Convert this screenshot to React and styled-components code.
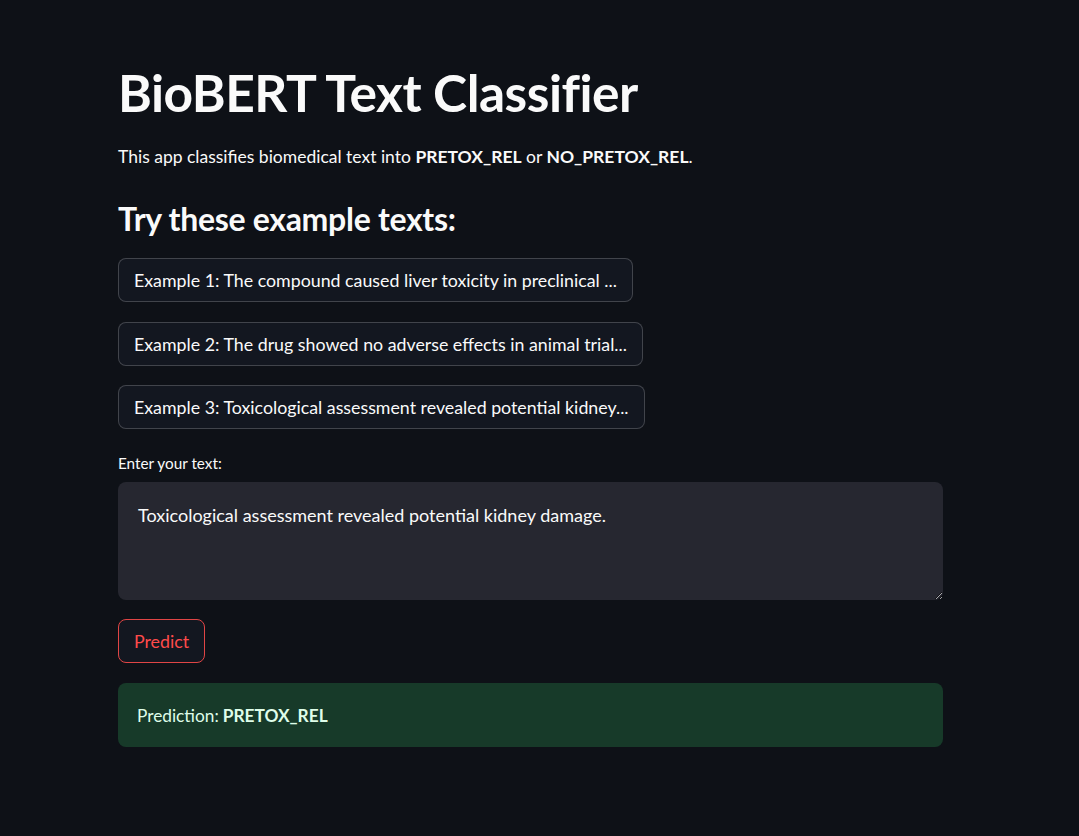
import React from "react";
import styled, { createGlobalStyle } from "styled-components";

const Global = createGlobalStyle`
  html, body {
    margin: 0;
    padding: 0;
    background: #0e1117;
  }
  body {
    font-family: Lato, "Noto Sans", sans-serif;
    color: #fafafa;
  }
`;

const Page = styled.div`
  min-height: 100vh;
  background: #0e1117;
`;

const Main = styled.main`
  width: 825px;
  margin-left: 118px;
  padding-top: 62px;
  display: flex;
  flex-direction: column;
`;

const Title = styled.h1`
  margin: 0;
  font-size: 51.5px;
  line-height: 60px;
  font-weight: 700;
  letter-spacing: -0.5px;
`;

const Intro = styled.p`
  margin: 21px 0 0;
  font-size: 17.5px;
  line-height: 28px;

  strong {
    font-weight: 700;
  }
`;

const Subtitle = styled.h2`
  margin: 28px 0 0;
  font-size: 32px;
  line-height: 40px;
  font-weight: 700;
  letter-spacing: -0.3px;
`;

const ExampleList = styled.div`
  margin-top: 19px;
  display: flex;
  flex-direction: column;
  align-items: flex-start;
  gap: 19.5px;
`;

const Button = styled.button`
  height: 44px;
  padding: 0 15px;
  border-radius: 8px;
  border: 1px solid ${(p) => (p.$primary ? "#e04545" : "rgba(250, 250, 250, 0.2)")};
  background: #131720;
  color: ${(p) => (p.$primary ? "#ff4b4b" : "#fafafa")};
  font-family: inherit;
  font-size: 17.8px;
  cursor: pointer;
`;

const Label = styled.label`
  margin-top: 24px;
  font-size: 15.3px;
  line-height: 20px;
`;

const TextArea = styled.textarea`
  margin-top: 9px;
  box-sizing: border-box;
  width: 100%;
  height: 118px;
  padding: 21px 20px;
  border: none;
  border-radius: 8px;
  background: #262730;
  color: #fafafa;
  font-family: inherit;
  font-size: 18px;
  line-height: 24px;
  outline: none;
  resize: vertical;
`;

const Actions = styled.div`
  margin-top: 19px;
`;

const Alert = styled.div`
  margin-top: 20px;
  height: 64px;
  box-sizing: border-box;
  padding: 0 19px;
  display: flex;
  align-items: center;
  border-radius: 8px;
  background: #173a29;
  color: #dffde9;
  font-size: 17.3px;

  strong {
    margin-left: 4px;
    font-weight: 700;
  }
`;

const examples = [
  "Example 1: The compound caused liver toxicity in preclinical ...",
  "Example 2: The drug showed no adverse effects in animal trial...",
  "Example 3: Toxicological assessment revealed potential kidney...",
];

export default function App() {
  return (
    <Page>
      <Global />
      <Main>
        <Title>BioBERT Text Classifier</Title>
        <Intro>
          This app classifies biomedical text into <strong>PRETOX_REL</strong> or{" "}
          <strong>NO_PRETOX_REL</strong>.
        </Intro>
        <Subtitle>Try these example texts:</Subtitle>
        <ExampleList>
          {examples.map((e) => (
            <Button key={e}>{e}</Button>
          ))}
        </ExampleList>
        <Label htmlFor="input">Enter your text:</Label>
        <TextArea
          id="input"
          defaultValue="Toxicological assessment revealed potential kidney damage."
        />
        <Actions>
          <Button $primary>Predict</Button>
        </Actions>
        <Alert>
          Prediction: <strong>PRETOX_REL</strong>
        </Alert>
      </Main>
    </Page>
  );
}
